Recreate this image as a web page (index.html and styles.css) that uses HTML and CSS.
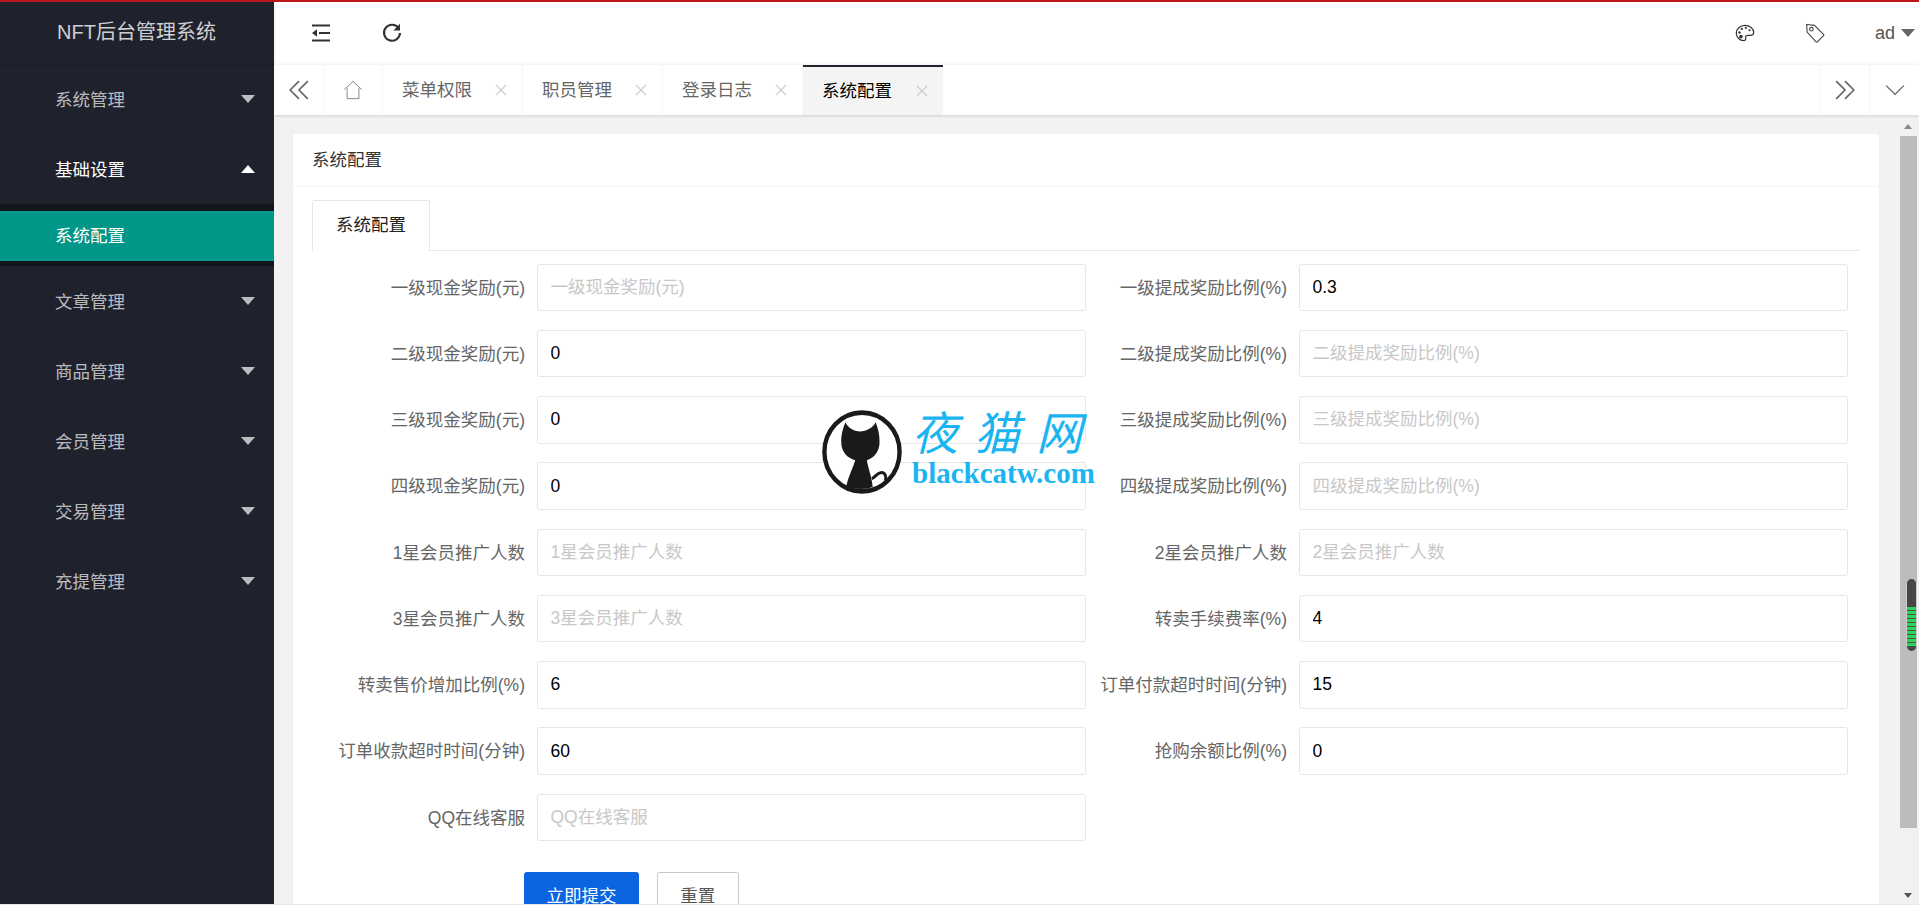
FILE: index.html
```html
<!DOCTYPE html>
<html lang="zh-CN">
<head>
<meta charset="utf-8">
<title>NFT后台管理系统</title>
<link rel="stylesheet" href="styles.css">
</head>
<body>
<div class="app">
  <aside class="side">
    <div class="logo">NFT后台管理系统</div>
    <nav class="nav">
      <div class="nav-item"><span>系统管理</span><i class="tri"></i></div>
      <div class="nav-item is-open"><span>基础设置</span><i class="tri tri-up"></i></div>
      <div class="nav-sub"><div class="nav-sub-item">系统配置</div></div>
      <div class="nav-item"><span>文章管理</span><i class="tri"></i></div>
      <div class="nav-item"><span>商品管理</span><i class="tri"></i></div>
      <div class="nav-item"><span>会员管理</span><i class="tri"></i></div>
      <div class="nav-item"><span>交易管理</span><i class="tri"></i></div>
      <div class="nav-item"><span>充提管理</span><i class="tri"></i></div>
    </nav>
  </aside>
  <div class="main">
    <header class="top">
      <div class="top-left">
        <svg class="ico" viewBox="0 0 20 20"><path d="M1 2.500h18M1 17.500h18M8 10h11" fill="none" stroke="#333" stroke-width="2"/><path d="M6 6.200v7.600L1 10z" fill="#333"/></svg>
        <svg class="ico" viewBox="0 0 20 20"><path d="M16.600 5.200A8 8 0 1 0 18 10" fill="none" stroke="#333" stroke-width="2.100"/><path d="M18 .8v6.600h-6.600z" fill="#333"/></svg>
      </div>
      <div class="top-right">
        <svg class="ico" viewBox="0 0 22 22"><path d="M11 2.600C5.600 2.600 1.400 6.600 1.400 11.300c0 4.600 4 8.100 8.100 8.100 2 0 2.600-1.300 2.200-2.700-.5-1.800.6-3.100 2.500-3.100h2.900c2.200 0 3.500-1.300 3.500-3.100 0-4.400-4.300-7.900-9.600-7.900z" fill="none" stroke="#333" stroke-width="1.300"/><circle cx="5" cy="10.500" r="1.300" fill="#333"/><circle cx="7.500" cy="6.500" r="1.200" fill="#333"/><circle cx="12" cy="5.500" r="1.200" fill="#333"/><circle cx="16" cy="8" r="1.200" fill="#333"/><circle cx="6.500" cy="15" r="2" fill="#333"/></svg>
        <svg class="ico" viewBox="0 0 22 22"><path d="M1.800 1.600l8.600 1 10 9.900a1 1 0 0 1 0 1.400l-6.900 6.900a1 1 0 0 1-1.400 0L2.300 10z" fill="none" stroke="#444" stroke-width="1.200"/><circle cx="7" cy="6.800" r="2" fill="none" stroke="#444" stroke-width="1.200"/></svg>
        <div class="user"><span>ad</span><i class="caret"></i></div>
      </div>
    </header>
    <div class="tabs">
      <div class="tab-cell"><svg class="tab-ico" viewBox="0 0 20 20"><path d="M10 2L2 10l8 8M18 2l-8 8 8 8" fill="none" stroke="#666" stroke-width="1.500"/></svg></div>
      <div class="tab-cell tab-home"><svg class="home-ico" viewBox="0 0 22 22"><path d="M1.500 10.500L11 1.500l9.500 9M4.500 9v11.500h13V9" fill="none" stroke="#888" stroke-width="1.100"/></svg></div>
      <div class="tab"><span>菜单权限</span><svg class="close" viewBox="0 0 12 12"><path d="M1 1l10 10M11 1L1 11"/></svg></div>
      <div class="tab"><span>职员管理</span><svg class="close" viewBox="0 0 12 12"><path d="M1 1l10 10M11 1L1 11"/></svg></div>
      <div class="tab"><span>登录日志</span><svg class="close" viewBox="0 0 12 12"><path d="M1 1l10 10M11 1L1 11"/></svg></div>
      <div class="tab tab-on"><span>系统配置</span><svg class="close" viewBox="0 0 12 12"><path d="M1 1l10 10M11 1L1 11"/></svg></div>
      <div class="tab-space"></div>
      <div class="tab-cell tab-right"><svg class="tab-ico" viewBox="0 0 20 20"><path d="M2 2l8 8-8 8M10 2l8 8-8 8" fill="none" stroke="#666" stroke-width="1.500"/></svg></div>
      <div class="tab-cell tab-right"><svg class="tab-ico" viewBox="0 0 20 20"><path d="M2 6l8 8 8-8" fill="none" stroke="#666" stroke-width="1.200"/></svg></div>
    </div>
    <div class="body-row">
      <section class="content">
        <div class="card">
          <div class="card-title">系统配置</div>
          <div class="card-body">
            <div class="subtabs"><div class="subtab">系统配置</div></div>
            <form class="form">
              <div class="field"><label>一级现金奖励(元)</label><input placeholder="一级现金奖励(元)"></div>
              <div class="field"><label>一级提成奖励比例(%)</label><input value="0.3"></div>
              <div class="field"><label>二级现金奖励(元)</label><input value="0"></div>
              <div class="field"><label>二级提成奖励比例(%)</label><input placeholder="二级提成奖励比例(%)"></div>
              <div class="field"><label>三级现金奖励(元)</label><input value="0"></div>
              <div class="field"><label>三级提成奖励比例(%)</label><input placeholder="三级提成奖励比例(%)"></div>
              <div class="field"><label>四级现金奖励(元)</label><input value="0"></div>
              <div class="field"><label>四级提成奖励比例(%)</label><input placeholder="四级提成奖励比例(%)"></div>
              <div class="field"><label>1星会员推广人数</label><input placeholder="1星会员推广人数"></div>
              <div class="field"><label>2星会员推广人数</label><input placeholder="2星会员推广人数"></div>
              <div class="field"><label>3星会员推广人数</label><input placeholder="3星会员推广人数"></div>
              <div class="field"><label>转卖手续费率(%)</label><input value="4"></div>
              <div class="field"><label>转卖售价增加比例(%)</label><input value="6"></div>
              <div class="field"><label>订单付款超时时间(分钟)</label><input value="15"></div>
              <div class="field"><label>订单收款超时时间(分钟)</label><input value="60"></div>
              <div class="field"><label>抢购余额比例(%)</label><input value="0"></div>
              <div class="field"><label>QQ在线客服</label><input placeholder="QQ在线客服"></div>
              <div class="actions">
                <button type="button" class="btn btn-primary">立即提交</button>
                <button type="button" class="btn btn-reset">重置</button>
              </div>
            </form>
          </div>
        </div>
      </section>
      <div class="scroll">
        <i class="arrow-up"></i>
        <div class="track"><div class="thumb"></div></div>
        <i class="arrow-down"></i>
      </div>
    </div>
  </div>
</div>
<div class="mark">
  <svg class="mark-cat" viewBox="0 0 84 84" preserveAspectRatio="none">
    <circle cx="42" cy="42" r="38.500" fill="#fff" stroke="#1a1a1a" stroke-width="4.500"/>
    <path d="M25 13C27 18 34 22 40 22C46 22 54 18 56 13C58 18 60 24 60 32C60 42 54 48 47 50C48 57 52 66 53 76C46 79 34 79 26 75C28 66 33 57 35 50C27 48 20.700 42 20.700 32C20.700 24 23 18 25 13Z" fill="#1a1a1a"/>
    <path d="M52 68C56 67 57 62 62 62C66 62 67 66 66 70" fill="none" stroke="#1a1a1a" stroke-width="3"/>
  </svg>
  <div class="mark-text">
    <div class="mark-cn">夜猫网</div>
    <div class="mark-en">blackcatw.com</div>
  </div>
</div>
</body>
</html>
```
FILE: styles.css
```css
* { box-sizing: border-box; }
html, body { margin: 0; height: 905px; overflow: hidden; }
body { font: 17.5px "Liberation Sans", "Noto Sans CJK SC", sans-serif; color: #666; background: #fff; }
.app { display: flex; height: 905px; border-top: 2px solid #b8161b; border-bottom: 1px solid #efe4e2; }

.side { width: 274px; flex: none; background: #1f222d; }
.logo { height: 62px; line-height: 60px; padding-left: 57px; font-size: 20px; color: rgba(255,255,255,.8); box-shadow: 0 1px 2px rgba(0,0,0,.12); }
.nav-item { height: 70px; display: flex; align-items: center; justify-content: space-between; padding: 0 19px 0 55px; color: rgba(255,255,255,.7); }
.nav-item span { padding-bottom: 2px; }
.nav-item.is-open { color: #fff; }
.tri { width: 0; height: 0; border: 7.5px solid transparent; border-top: 8px solid rgba(255,255,255,.7); border-bottom: 0; }
.tri-up { border-top: 0; border-bottom: 8px solid #fff; }
.nav-sub { background: #14161d; padding: 7px 0 5px; }
.nav-sub-item { height: 50px; line-height: 50px; padding-left: 55px; background: #009688; color: #fff; }

.main { flex: 1; min-width: 0; display: flex; flex-direction: column; }
.top { height: 62px; flex: none; display: flex; align-items: center; justify-content: space-between; }
.top-left { display: flex; align-items: center; gap: 51px; padding-left: 37px; }
.ico { width: 20px; height: 20px; display: block; }
.top-right { display: flex; align-items: center; gap: 50px; padding-right: 4px; }
.user { display: flex; align-items: center; gap: 6px; color: #555; font-size: 18px; }
.caret { width: 0; height: 0; border: 7.5px solid transparent; border-top: 8px solid #666; border-bottom: 0; }

.tabs { height: 51px; flex: none; display: flex; border-top: 1px solid #f6f6f6; box-shadow: 0 1px 3px rgba(0,0,0,.14); position: relative; background: #fff; }
.tab-cell { width: 50px; display: flex; align-items: center; justify-content: center; border-right: 1px solid #f6f6f6; }
.tab-home { width: 59px; }
.tab-right { border-right: 0; border-left: 1px solid #f6f6f6; }
.tab-ico { width: 22px; height: 22px; }
.home-ico { width: 20px; height: 20px; }
.tab { width: 140px; display: flex; align-items: center; justify-content: space-between; padding: 0 15px 0 19px; border-right: 1px solid #f6f6f6; color: #666; }
.tab span { padding-bottom: 4px; }
.tab-on { background: #f4f4f5; color: #000; border-top: 2px solid #22242e; border-right: 0; }
.close { width: 12px; height: 12px; fill: none; stroke: #ccc; stroke-width: 1.100; }
.tab-space { flex: 1; }

.body-row { flex: 1; min-height: 0; display: flex; background: #f2f2f2; }
.content { width: 1626px; flex: none; padding: 19px 21px 0 19px; overflow: hidden; }
.card { background: #fff; border-radius: 2.5px; height: 900px; }
.card-title { height: 53px; line-height: 52px; padding-left: 19px; border-bottom: 1px solid #f6f6f6; color: #333; }
.card-body { padding: 13px 19px 0 19px; }
.subtabs { height: 51px; border-bottom: 1px solid #e6e6e6; }
.subtab { width: 118px; height: 51px; line-height: 49px; text-align: center; background: #fff; border: 1px solid #e6e6e6; border-bottom: 0; border-radius: 2.5px 2.5px 0 0; color: #222; }

.form { display: grid; grid-template-columns: 762px 762px; row-gap: 18.75px; padding: 12.5px 0 0 12px; }
.field { display: flex; height: 47.5px; align-items: center; }
.field label { width: 201px; flex: none; text-align: right; white-space: nowrap; padding-bottom: 2.5px; }
.field input { margin-left: 11.5px; flex: 1; min-width: 0; height: 47.5px; border: 1px solid #e6e6e6; border-radius: 2.5px; padding: 0 13px; font: inherit; color: #000; background: #fff; outline: 0; }
.field input::placeholder { color: #c8c8c8; opacity: 1; }
.actions { grid-column: 1 / -1; display: flex; gap: 17.5px; padding: 12.5px 0 0 200px; }
.btn { height: 47.5px; padding: 0 0 3px; border: 1px solid #c9c9c9; border-radius: 2.5px; font: inherit; background: #fff; color: #555; }
.btn-primary { width: 115px; border-color: #0b64e0; background: #0b64e0; color: #fff; }
.btn-reset { width: 82.5px; }

.scroll { width: 19px; flex: none; display: flex; flex-direction: column; align-items: flex-start; background: #f1f1f1; }
.track { width: 17px; height: 692px; background: #bcbcbc; padding-top: 442px; }
.thumb { width: 11px; height: 74px; margin-left: 5.5px; border-radius: 5.5px; border: 1px solid #ccc; background: repeating-linear-gradient(#2fd35a 0 3px, #3c5a45 3px 4px) 0 28px / 100% 40px no-repeat #474747; }
.arrow-up, .arrow-down { width: 0; height: 0; margin-left: 4px; border: 4.5px solid transparent; }
.arrow-up { margin-top: 9px; margin-bottom: 7px; border-top: 0; border-bottom: 5px solid #888; }
.arrow-down { margin-top: 65px; border-bottom: 0; border-top: 5px solid #555; }

.mark { position: absolute; left: 821px; top: 409px; display: flex; gap: 9px; align-items: flex-start; }
.mark-cat { width: 82px; height: 86px; display: block; flex: none; }
.mark-cn { font-size: 46px; line-height: 50px; letter-spacing: 16px; color: #1ab5f0; font-style: italic; white-space: nowrap; }
.mark-en { font: bold 29px/26px "Liberation Serif", serif; color: #1ab5f0; white-space: nowrap; margin-top: 1px; }
```
